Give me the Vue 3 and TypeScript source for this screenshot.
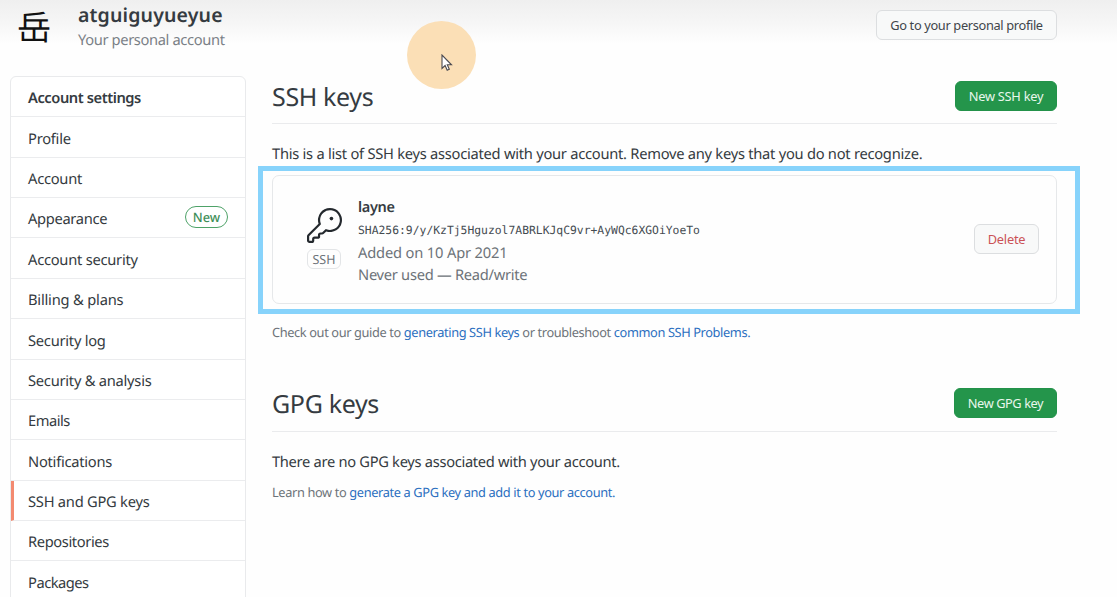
<script setup lang="ts">
interface MenuItem {
  label: string
  badge?: string
  active?: boolean
  cls: string
}

const menu: MenuItem[] = [
  { label: 'Profile', cls: 'm-profile' },
  { label: 'Account', cls: 'm-account' },
  { label: 'Appearance', badge: 'New', cls: 'm-appearance' },
  { label: 'Account security', cls: 'm-accsec' },
  { label: 'Billing & plans', cls: 'm-billing' },
  { label: 'Security log', cls: 'm-log' },
  { label: 'Security & analysis', cls: 'm-analysis' },
  { label: 'Emails', cls: 'm-emails' },
  { label: 'Notifications', cls: 'm-notif' },
  { label: 'SSH and GPG keys', active: true, cls: 'm-keys' },
  { label: 'Repositories', cls: 'm-repos' },
  { label: 'Packages', cls: 'm-packages' },
]
</script>

<template>
  <div class="page">
    <header class="top">
      <div class="avatar">岳</div>
      <div class="who">
        <div class="name"><span>atguiguyueyue</span></div>
        <div class="sub"><span>Your personal account</span></div>
      </div>
      <button class="btn go"><span>Go to your personal profile</span></button>
    </header>

    <div class="body">
      <nav class="menu">
        <div class="row head"><span>Account settings</span></div>
        <div v-for="m in menu" :key="m.label" class="row" :class="{ active: m.active }">
          <span :class="m.cls">{{ m.label }}</span>
          <b v-if="m.badge" class="badge">{{ m.badge }}</b>
        </div>
      </nav>

      <main class="main">
        <section class="section-head">
          <h2><span>SSH keys</span></h2>
          <button class="btn green ssh-btn"><span>New SSH key</span></button>
        </section>
        <p class="lead list-lead"><span>This is a list of SSH keys associated with your account. Remove any keys that you do not recognize.</span></p>

        <div class="highlight">
          <div class="card">
            <div class="key-icon">
              <svg width="35" height="35" viewBox="0 0 24 24" fill="#24292e">
                <path d="M16.75 8.5a1.25 1.25 0 1 0 0-2.5 1.25 1.25 0 0 0 0 2.5z" />
                <path
                  fill-rule="evenodd"
                  d="M15.75 0a8.25 8.25 0 0 0-7.851 10.79L.513 18.178A1.75 1.75 0 0 0 0 19.414v2.836C0 23.217.784 24 1.75 24h1.5A1.75 1.75 0 0 0 5 22.25v-1a.25.25 0 0 1 .25-.25h2.735a.75.75 0 0 0 .545-.22l.214-.213A.875.875 0 0 0 9 19.948V18.5a.25.25 0 0 1 .25-.25h1.086c.464 0 .91-.184 1.237-.513l1.636-1.636A8.25 8.25 0 1 0 15.75 0zM9 8.25a6.75 6.75 0 1 1 4.288 6.287.75.75 0 0 0-.804.168l-1.971 1.972a.25.25 0 0 1-.177.073H9.25A1.75 1.75 0 0 0 7.5 18.5v1H5.25a1.75 1.75 0 0 0-1.75 1.75v1a.25.25 0 0 1-.25.25h-1.5a.25.25 0 0 1-.25-.25v-2.836a.25.25 0 0 1 .073-.177l7.722-7.721a.75.75 0 0 0 .168-.804A6.73 6.73 0 0 1 9 8.25z"
                />
              </svg>
              <div class="tag"><span>SSH</span></div>
            </div>
            <div class="info">
              <div class="key-name"><span>layne</span></div>
              <div class="finger"><span>SHA256:9/y/KzTj5Hguzol7ABRLKJqC9vr+AyWQc6XGOiYoeTo</span></div>
              <div class="meta added"><span>Added on 10 Apr 2021</span></div>
              <div class="meta used"><span>Never used — Read/write</span></div>
            </div>
            <button class="btn delete"><span>Delete</span></button>
          </div>
        </div>

        <p class="note guide"><span>Check out our guide to <a>generating SSH keys</a> or troubleshoot <a>common SSH Problems.</a></span></p>

        <section class="section-head gpg">
          <h2><span>GPG keys</span></h2>
          <button class="btn green gpg-btn"><span>New GPG key</span></button>
        </section>
        <p class="lead gpg-lead"><span>There are no GPG keys associated with your account.</span></p>
        <p class="note learn"><span>Learn how to <a>generate a GPG key and add it to your account.</a></span></p>
      </main>
    </div>

    <div class="pointer">
      <svg width="12" height="18" viewBox="0 0 12 18">
        <path d="M1 1v13.4l3.1-2.9 2.1 4.7 2.1-.9-2-4.5h4.2z" fill="#fff" stroke="#4b4a50" stroke-width="1.1" />
      </svg>
    </div>
  </div>
</template>

<style>
html,
body {
  margin: 0;
  overflow: hidden;
  background: #fff;
}
</style>

<style scoped>
.page {
  position: relative;
  width: 1117px;
  height: 597px;
  overflow: hidden;
  box-sizing: border-box;
  background: linear-gradient(#efefef 0, #f5f5f5 20px, #fefefe 44px, #fefefe 100%);
  font-family: 'Noto Sans', 'Open Sans', 'Noto Sans CJK SC', sans-serif;
  color: #353b41;
  white-space: nowrap;
  text-rendering: geometricPrecision;
}
.top {
  display: flex;
  height: 76px;
  padding: 0 60px 0 17px;
  box-sizing: border-box;
}
.avatar {
  width: 61px;
  font: 400 34.2px/50px 'Noto Sans CJK SC', sans-serif;
  color: #111;
}
.who {
  flex: 1;
}
.name {
  font-size: 19.5px;
  font-weight: 600;
  line-height: 30px;
  letter-spacing: 0.15px;
}
.sub {
  font-size: 14.7px;
  line-height: 20px;
  letter-spacing: -0.37px;
  color: #7b8187;
}
.btn {
  display: flex;
  align-items: center;
  justify-content: center;
  box-sizing: border-box;
  height: 30px;
  padding: 0;
  border: 1px solid #dcdee0;
  border-radius: 6px;
  background: #f8f9f9;
  font-family: inherit;
  font-size: 12.8px;
  color: #3f454b;
}
.go {
  width: 181px;
  margin-top: 10px;
  letter-spacing: -0.34px;
}
.body {
  display: flex;
  padding-left: 10px;
}
.menu {
  width: 236px;
  height: 540px;
  box-sizing: border-box;
  border: 1px solid #e9eaec;
  border-radius: 6px 6px 0 0;
  background: #fff;
  font-size: 14.7px;
  letter-spacing: -0.25px;
}
.row {
  display: flex;
  align-items: center;
  justify-content: space-between;
  height: 40.36px;
  box-sizing: border-box;
  padding: 3.4px 17px 0 17px;
  border-bottom: 1px solid #ebecee;
}
.head {
  font-weight: 600;
  letter-spacing: -0.44px;
}
.m-appearance {
  letter-spacing: -0.33px;
}
.m-billing {
  letter-spacing: -0.2px;
}
.m-emails,
.m-packages {
  letter-spacing: -0.5px;
}
.m-repos {
  letter-spacing: -0.39px;
}
.active {
  padding-left: 14px;
  border-left: 3px solid #f38a70;
}
.badge {
  width: 43px;
  height: 22px;
  margin-top: -4px;
  box-sizing: border-box;
  border: 1px solid #4ea268;
  border-radius: 11px;
  text-align: center;
  font-weight: 500;
  font-size: 12.8px;
  line-height: 20px;
  letter-spacing: 0;
  color: #3f8f59;
}
.main {
  width: 785px;
  margin-left: 26px;
}
.section-head {
  display: flex;
  justify-content: space-between;
  height: 48px;
  box-sizing: border-box;
  border-bottom: 1px solid #eaebed;
}
h2 {
  margin: 0;
  font-size: 25px;
  font-weight: 400;
  line-height: 42px;
  letter-spacing: -0.35px;
}
.green {
  margin-top: 5px;
  border-color: #23924a;
  background: #24954b;
  color: #e9f7ed;
}
.ssh-btn {
  width: 102px;
  letter-spacing: -0.25px;
}
.gpg-btn {
  width: 103px;
  letter-spacing: -0.43px;
}
.lead {
  margin: 0;
  font-size: 14.7px;
  line-height: 20px;
  letter-spacing: -0.26px;
}
.list-lead {
  height: 41px;
  box-sizing: border-box;
  padding-top: 20px;
}
.highlight {
  width: 822px;
  height: 148px;
  margin: 1px 0 0 -14px;
  box-sizing: border-box;
  border: 5px solid #87d3fb;
  padding: 4px 0 0 9px;
  background: #fefefe;
}
.card {
  display: flex;
  width: 785px;
  height: 129px;
  box-sizing: border-box;
  border: 1px solid #e6e8ea;
  border-radius: 7px;
  padding-right: 17px;
}
.key-icon {
  display: flex;
  flex-direction: column;
  align-items: center;
  width: 34px;
  margin: 32px 17px 0 34px;
}
.key-icon svg {
  flex: none;
}
.tag {
  width: 34px;
  height: 20px;
  margin-top: 6px;
  box-sizing: border-box;
  border: 1px solid #e3e5e7;
  border-radius: 6px;
  text-align: center;
  font-size: 12.5px;
  line-height: 19px;
  color: #6d747a;
}
.info {
  flex: 1;
  padding-top: 20px;
}
.key-name {
  font-size: 14.5px;
  font-weight: 600;
  line-height: 23px;
  letter-spacing: -0.35px;
}
.finger {
  font-family: 'DejaVu Sans Mono', 'Liberation Mono', monospace;
  font-size: 11.36px;
  line-height: 22px;
  color: #444b51;
}
.meta {
  font-size: 14.7px;
  line-height: 22px;
  color: #6d7379;
}
.added {
  margin-top: 1px;
  letter-spacing: -0.17px;
}
.used {
  letter-spacing: -0.28px;
}
.delete {
  width: 65px;
  margin-top: 48px;
  letter-spacing: -0.2px;
  color: #cb5257;
}
.note {
  margin: 0;
  font-size: 12.8px;
  line-height: 20px;
  color: #6d7379;
}
.note a {
  color: #2b6fc0;
}
.guide {
  padding-top: 8px;
  letter-spacing: -0.38px;
}
.gpg {
  margin-top: 41px;
  height: 49px;
}
.gpg-lead {
  padding-top: 20px;
  letter-spacing: -0.31px;
}
.learn {
  padding-top: 10px;
  letter-spacing: -0.37px;
}
.pointer {
  position: absolute;
  left: 407px;
  top: 21px;
  width: 69px;
  height: 68px;
  border-radius: 50%;
  background: #fbdfb6;
}
.pointer svg {
  position: absolute;
  left: 34px;
  top: 33px;
}
</style>
